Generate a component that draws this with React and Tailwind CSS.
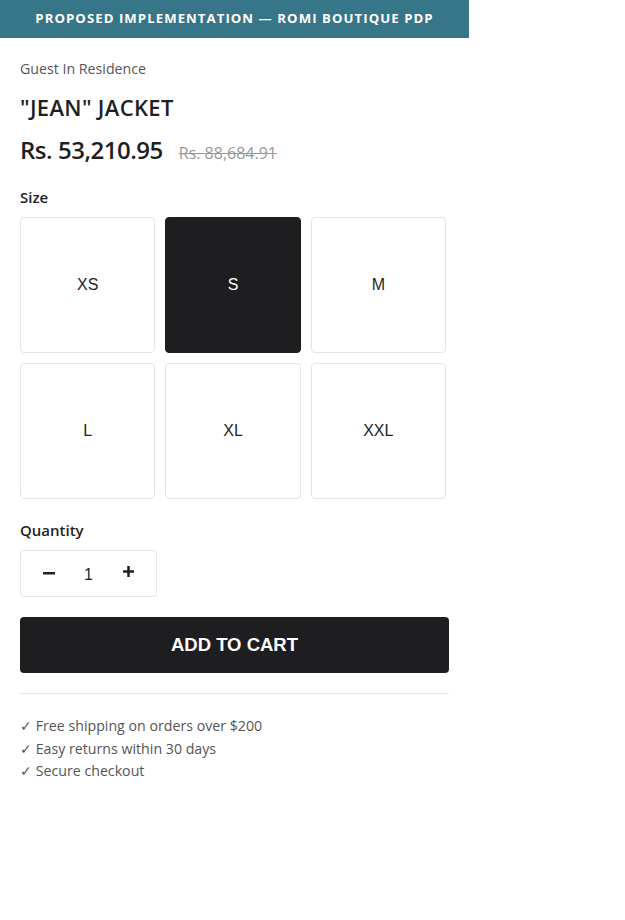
import React, { useState } from 'react'

const SIZES = ['XS', 'S', 'M', 'L', 'XL', 'XXL']

export default function App() {
  const [size, setSize] = useState('S')
  const [qty, setQty] = useState(1)

  const body = { fontFamily: '"Open Sans", "Noto Sans", sans-serif' }
  const arial = { fontFamily: '"Liberation Sans", Arial, sans-serif' }

  return (
    <div className="w-[625px] min-h-[920px] bg-white" style={body}>
      {/* Banner */}
      <div className="w-[469px] h-[38px] bg-[#367688] flex items-center justify-center">
        <span className="text-white text-[13.2px] font-bold tracking-[0.08em]">PROPOSED IMPLEMENTATION — ROMI BOUTIQUE PDP</span>
      </div>

      <div className="w-[429px] ml-5 pt-[21px]">
        <div className="text-[14.2px] leading-5 text-[#555]">Guest In Residence</div>
        <h1 className="mt-[14px] text-[22px] leading-7 font-semibold tracking-[0.015em] text-[#1f1f1f]">"JEAN" JACKET</h1>
        <div className="mt-[13px] flex items-baseline gap-[16px]">
          <span className="text-[24px] leading-8 font-semibold tracking-[-0.02em] text-[#1f1f1f]">Rs. 53,210.95</span>
          <span className="text-[16px] text-[#999] line-through">Rs. 88,684.91</span>
        </div>

        {/* Size */}
        <div className="mt-[21px] text-[15px] leading-5 font-semibold text-[#1f1f1f]">Size</div>
        <div className="mt-[10px] w-[426px] grid grid-cols-3 gap-[10px]" style={arial}>
          {SIZES.map(s => (
            <button
              key={s}
              onClick={() => setSize(s)}
              className={'h-[136px] rounded-[4px] border text-[16px] flex items-center justify-center ' +
                (size === s ? 'bg-[#1e1e20] border-[#1e1e20] text-white' : 'bg-white border-[#e5e5e5] text-[#1f1f1f]')}
            >
              {s}
            </button>
          ))}
        </div>

        {/* Quantity */}
        <div className="mt-[21px] text-[15px] leading-5 font-semibold text-[#1f1f1f]">Quantity</div>
        <div className="mt-[10px] w-[137px] h-[47px] rounded-[4px] border border-[#e5e5e5] flex items-center justify-center" style={arial}>
          <button onClick={() => setQty(q => Math.max(1, q - 1))} className="w-10 flex justify-center">
            <svg width="12" height="3" viewBox="0 0 12 3"><rect width="12" height="2.5" fill="#1f1f1f" /></svg>
          </button>
          <span className="w-10 text-center text-[16px] text-[#1f1f1f] pt-[3px]">{qty}</span>
          <button onClick={() => setQty(q => q + 1)} className="w-10 flex justify-center pb-[5px]">
            <svg width="11" height="11" viewBox="0 0 11 11"><rect x="4.25" width="2.5" height="11" fill="#1f1f1f" /><rect y="4.25" width="11" height="2.5" fill="#1f1f1f" /></svg>
          </button>
        </div>

        <button className="mt-[20px] w-full h-[56px] rounded-[4px] bg-[#1e1e20] text-white text-[18.5px] font-bold" style={arial}>
          ADD TO CART
        </button>

        <div className="mt-[20px] border-t border-[#e5e5e5]" />

        <ul className="mt-[21px] text-[14.2px] leading-[22.5px] text-[#555]">
          <li>✓ Free shipping on orders over $200</li>
          <li>✓ Easy returns within 30 days</li>
          <li>✓ Secure checkout</li>
        </ul>
      </div>
    </div>
  )
}
